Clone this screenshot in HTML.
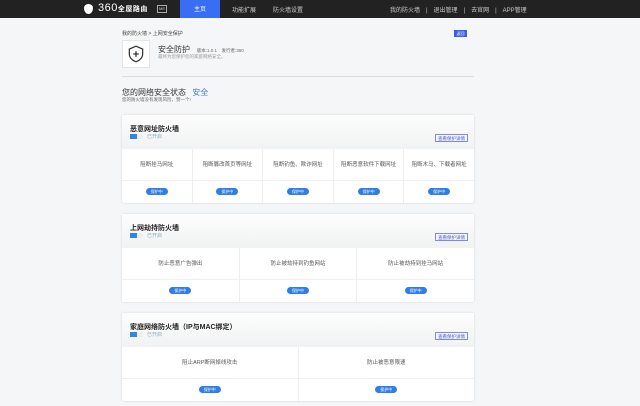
<!DOCTYPE html><html><head><meta charset="utf-8"><style>
*{margin:0;padding:0;box-sizing:border-box}
body{width:640px;height:406px;overflow:hidden;background:#f5f6f7;font-family:"Liberation Sans","Noto Sans CJK SC",sans-serif;color:#333;position:relative}
.nav{position:absolute;left:0;top:0;width:640px;height:18px;background:#222}
.nav span{position:absolute;top:5px;font-size:6px;color:#ccc}
.tab{position:absolute;left:180px;top:0;width:40px;height:18px;background:#3a6ef2;color:#fff;font-size:6px;text-align:center;line-height:20px}
.abs{position:absolute}
.card{position:absolute;left:122px;width:352px;background:#fff;border-radius:2px;box-shadow:0 0 2px rgba(0,0,0,.15)}
.hd{height:34px;background:linear-gradient(#fdfdfd,#f1f2f3);position:relative}
.hd b{position:absolute;left:8px;top:9px;font-size:7px;color:#222}
.sw{position:absolute;left:8px;top:19px;width:7px;height:5px;background:#2f86e6}
.sw2{position:absolute;left:15px;top:19px;width:6px;height:5px;background:#eee}
.hd i{position:absolute;left:25px;top:18px;font-size:5px;color:#8ab;font-style:normal}
.det{position:absolute;right:6px;top:19px;width:33px;height:8px;border:1px solid #7d8be0;font-size:4.5px;color:#4a5bd0;text-align:center;line-height:7px}
.row{display:flex}
.row div{flex:1;border-right:1px solid #eee;text-align:center;font-size:5.5px;color:#555}
.row div:last-child{border-right:none}
.t div{height:32px;line-height:32px;border-bottom:1px solid #f0f0f0}
.b div{height:22px;padding-top:7px}
.b p{display:inline-block;width:22px;height:7px;border-radius:4px;background:#2f7ee8;color:#fff;font-size:4px;line-height:7px}
</style></head><body>
<div class="nav">
<div class="abs" style="left:84px;top:4px;width:9px;height:10px;background:#fff;border-radius:50% 50% 50% 50%/40% 40% 60% 60%"></div>
<span style="left:98px;top:2px;font-size:11px;color:#fff;letter-spacing:0.5px">360<span style="position:static;font-size:7px;font-weight:bold;color:#fff">全屋路由</span></span>
<span style="left:157px;top:5px;border:1px solid #aaa;font-size:4px;padding:0 1px;line-height:6px">ME</span>
<div class="tab">主页</div>
<span style="left:232px">功能扩展</span><span style="left:273px">防火墙设置</span>
<span style="left:390px">我的防火墙　|　退出管理　|　去官网　|　APP管理</span>
</div>
<div class="abs" style="left:122px;top:30px;font-size:5px;color:#444">我的防火墙 &gt; 上网安全保护</div>
<div class="abs" style="left:454px;top:30px;width:13px;height:7px;background:#3b5de8;font-size:4px;color:#fff;text-align:center;line-height:7px">返回</div>
<div class="abs" style="left:122px;top:40px;width:28px;height:28px;background:#fff;border:1px solid #e5e5e5"></div>
<svg class="abs" style="left:126px;top:44px" width="20" height="20" viewBox="0 0 18 18"><path d="M9 2 L15 4.5 V9 C15 12.5 12 15 9 16 C6 15 3 12.5 3 9 V4.5 Z" fill="none" stroke="#333" stroke-width="1.1"/><path d="M9 6.5V11.5M6.5 9H11.5" stroke="#333" stroke-width="1.2"/></svg>
<div class="abs" style="left:158px;top:44px;font-size:8px;color:#333">安全防护 <span style="font-size:4.5px;color:#666">　版本:1.0.1　发行者:360</span></div>
<div class="abs" style="left:158px;top:54px;font-size:4.5px;color:#999">最终为您保护您的家庭网络安全。</div>
<div class="abs" style="left:122px;top:76px;width:352px;height:1px;background:#ddd"></div>
<div class="abs" style="left:122px;top:87px;font-size:8px;color:#333">您的网络安全状态 <span style="color:#3a7be0;margin-left:4px">安全</span></div>
<div class="abs" style="left:122px;top:97px;font-size:4.5px;color:#666">您的防火墙没有发现风险，赞一个!</div>

<div class="card" style="top:115px;height:88px"><div class="hd"><b>恶意网址防火墙</b><span class="sw"></span><span class="sw2"></span><i>已开启</i><span class="det">查看保护详情</span></div>
<div class="row t"><div>阻断挂马网址</div><div>阻断篡改首页等网址</div><div>阻断钓鱼、欺诈网址</div><div>阻断恶意软件下载网址</div><div>阻断木马、下载者网址</div></div>
<div class="row b"><div><p>保护中</p></div><div><p>保护中</p></div><div><p>保护中</p></div><div><p>保护中</p></div><div><p>保护中</p></div></div></div>

<div class="card" style="top:214px;height:88px"><div class="hd"><b>上网劫持防火墙</b><span class="sw"></span><span class="sw2"></span><i>已开启</i><span class="det">查看保护详情</span></div>
<div class="row t"><div>防止恶意广告弹出</div><div>防止被劫持到钓鱼网站</div><div>防止被劫持到挂马网站</div></div>
<div class="row b"><div><p>保护中</p></div><div><p>保护中</p></div><div><p>保护中</p></div></div></div>

<div class="card" style="top:313px;height:88px"><div class="hd"><b>家庭网络防火墙（IP与MAC绑定）</b><span class="sw"></span><span class="sw2"></span><i>已开启</i><span class="det">查看保护详情</span></div>
<div class="row t"><div>阻止ARP断网掉线攻击</div><div>防止被恶意限速</div></div>
<div class="row b"><div><p>保护中</p></div><div><p>保护中</p></div></div></div>
</body></html>
